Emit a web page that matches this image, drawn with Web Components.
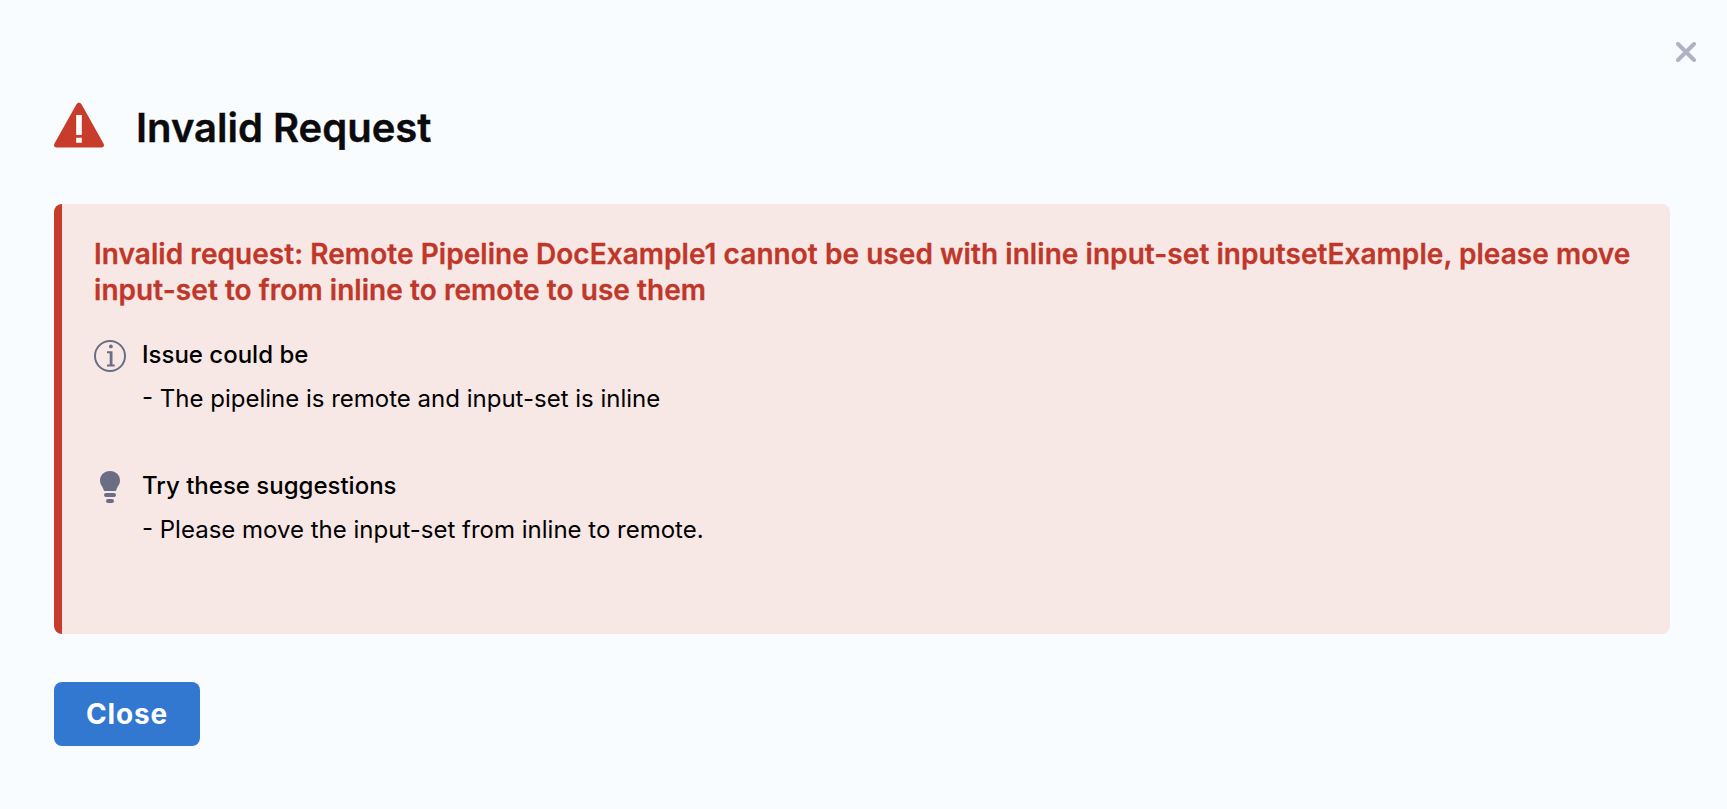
<!DOCTYPE html>
<html lang="en">
<head>
<meta charset="utf-8">
<title>Invalid Request</title>
<style>
  body { margin: 0; background: #f9fcff; font-family: Inter, "Liberation Sans", sans-serif; color: #0b0b0d; }
</style>
</head>
<body>
<error-dialog heading="Invalid Request">
  <error-panel message="Invalid request: Remote Pipeline DocExample1 cannot be used with inline input-set inputsetExample, please move input-set to from inline to remote to use them">
    <hint-item heading="Issue could be">
      <info-icon slot="icon"></info-icon>
      - The pipeline is remote and input-set is inline
    </hint-item>
    <hint-item heading="Try these suggestions">
      <bulb-icon slot="icon"></bulb-icon>
      - Please move the input-set from inline to remote.
    </hint-item>
  </error-panel>
  <primary-button slot="actions">Close</primary-button>
</error-dialog>
<script>
const define = (name, html) => customElements.define(name, class extends HTMLElement {
  constructor() {
    super();
    this.attachShadow({ mode: 'open' }).innerHTML = html;
  }
  connectedCallback() {
    this.shadowRoot.querySelectorAll('[data-attr]').forEach(el => {
      el.textContent = this.getAttribute(el.dataset.attr);
    });
  }
});

define('warning-icon', `
<style>:host{display:block;width:50px;height:46px} svg{display:block}</style>
<svg width="50" height="46" viewBox="0 0 50 46">
  <path fill="#c83c2c" d="M22.600 1.900Q25-1.100 27.400 1.900L49.500 41.500Q51 45.300 47.500 45.500H2.500Q-1 45.300.500 41.500Z"/>
  <path fill="#fff" d="M22.200 13h5.600v20h-5.600zM22.200 35.700h5.600v5h-5.600z"/>
</svg>`);

define('cross-icon', `
<style>:host{display:block;width:20px;height:20px} svg{display:block}</style>
<svg width="20" height="20" viewBox="0 0 20 20">
  <path d="M2 2L18 18M18 2L2 18" fill="none" stroke="#b0b1c4" stroke-width="4" stroke-linecap="round"/>
</svg>`);

define('info-icon', `
<style>:host{display:block;width:32px;height:32px} svg{display:block}</style>
<svg width="32" height="32" viewBox="0 0 32 32">
  <circle cx="16" cy="16" r="15" fill="none" stroke="#6b6d85" stroke-width="2"/>
  <circle cx="16.900" cy="6.400" r="1.900" fill="#6b6d85"/>
  <path fill="#6b6d85" d="M13 11.300h5.500v13.200h2.200v2h-7.700v-2h2.700v-11.200h-2.700z"/>
</svg>`);

define('bulb-icon', `
<style>:host{display:block;width:32px;height:32px} svg{display:block}</style>
<svg width="32" height="32" viewBox="0 0 32 32" fill="#6b6d85">
  <path d="M16 0C22 0 26 4.300 26 9.500C26 14 22.800 15.800 22.300 19.200Q22.200 20 21.300 20H10.700Q9.800 20 9.700 19.200C9.200 15.800 6 14 6 9.500C6 4.300 10 0 16 0Z"/>
  <rect x="10" y="22" width="12" height="4" rx="2"/>
  <rect x="12" y="28" width="8" height="4" rx="2"/>
</svg>`);

define('hint-item', `
<style>
  :host{display:grid;grid-template-columns:32px 1fr;column-gap:16px;font-size:24px;line-height:32px;color:#000}
  .icon{padding-top:1px}
  h3{margin:0 0 12px;font:inherit;font-weight:500}
  p{margin:0}
</style>
<div class="icon"><slot name="icon"></slot></div>
<div><h3 data-attr="heading"></h3><p><slot></slot></p></div>`);

define('error-panel', `
<style>
  :host{display:block;box-sizing:border-box;height:430px;padding:32px 32px 0 40px;border-radius:8px;
    background:linear-gradient(to right,#c83c2c 8px,#f7e8e5 8px)}
  h2{margin:0 0 31px;font-size:28px;line-height:36px;font-weight:600;letter-spacing:.055px;
    color:#c0372a;-webkit-text-stroke:.3px #c0372a}
  .hints{display:flex;flex-direction:column;gap:55px}
</style>
<h2 data-attr="message"></h2>
<div class="hints"><slot></slot></div>`);

define('primary-button', `
<style>
  :host{display:block}
  button{display:block;width:146px;height:64px;margin:0;padding:0;border:0;border-radius:8px;background:#3278d0;
    color:#fff;font:inherit;font-size:28px;font-weight:700;line-height:64px;letter-spacing:.8px;text-align:center}
</style>
<button type="button"><slot></slot></button>`);

define('error-dialog', `
<style>
  :host{display:flex;flex-direction:column;box-sizing:border-box;height:809px;padding:42px 57px 0 54px}
  .top{display:flex;justify-content:flex-end;height:60px;margin-right:-26px}
  header{display:flex;align-items:flex-start;gap:32px;height:102px}
  h1{margin:2px 0 0;font-size:40px;line-height:48px;font-weight:600;-webkit-text-stroke:.4px currentColor}
  footer{display:flex;margin-top:48px}
</style>
<div class="top"><cross-icon></cross-icon></div>
<header><warning-icon></warning-icon><h1 data-attr="heading"></h1></header>
<slot></slot>
<footer><slot name="actions"></slot></footer>`);
</script>
</body>
</html>
